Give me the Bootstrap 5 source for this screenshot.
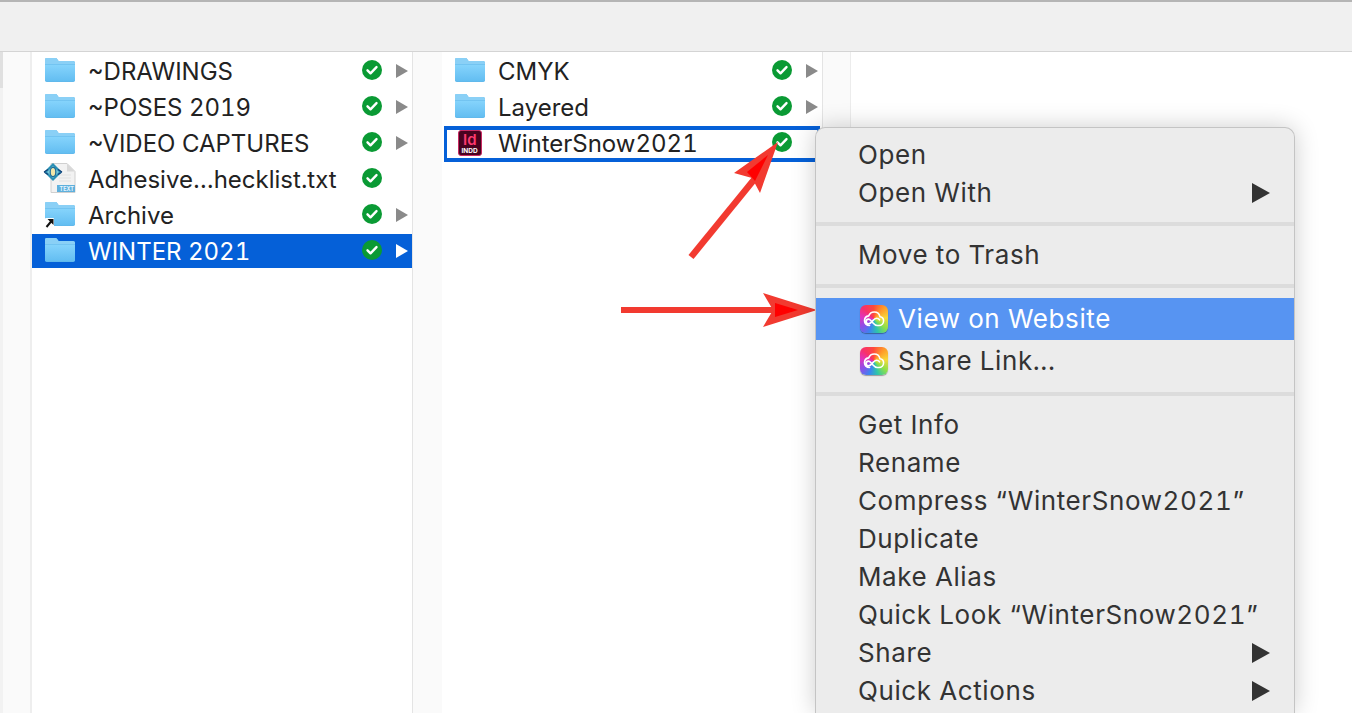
<!doctype html>
<html lang="en">
<head>
<meta charset="utf-8">
<title>Finder</title>
<link href="https://cdn.jsdelivr.net/npm/bootstrap@5.3.0/dist/css/bootstrap.min.css" rel="stylesheet">
<style>
html,body{height:713px;overflow:hidden;background:#fff}
body{font-family:Inter,"Liberation Sans",sans-serif;color:#222;position:relative;font-variant-numeric:tabular-nums}
.topbar{height:52px;background:#f0f0f0;border-top:2px solid #b5b5b5;border-bottom:1px solid #d4d4d4}
.browser{height:661px}
.gutter{width:32px;background:#fafafa;border-left:3px solid #f2f2f2;border-right:2px solid #eee;position:relative}
.gutter::before{content:"";position:absolute;left:-3px;top:0;width:3px;height:36px;background:#e0e0e0}
.pane{width:381px;border-right:1px solid #e4e4e4;padding-top:1px}
.spacer{width:29px;background:#fafafa}
.spacer2{width:28px;background:#fafafa;border-right:1px solid #ececec}
.frow{height:36px;background:transparent;border:0;padding:0;font-size:24px;color:#222;display:flex;align-items:center;position:relative;border-radius:0}
.frow svg{overflow:visible}
.frow .ficon{position:absolute;left:13px;top:4px;width:30px;height:26px}
.frow .fname{position:absolute;left:56px;top:1px;line-height:36px;white-space:nowrap}
.frow .fcheck{position:absolute;left:330px;top:7px;width:20px;height:20px}
.frow .farrow{position:absolute;left:364px;top:11px;width:12px;height:14px;fill:#8a8a8a}
.frow.sel{background:linear-gradient(#0560d8,#0560d8) 0 1px/100% 34px no-repeat;color:#fff}
.frow.sel .farrow{fill:#fff}
.frow.outlined{background:transparent}
.frow.outlined::after{content:"";position:absolute;left:2px;right:2px;top:1px;bottom:-1px;border:solid #0560d8;border-width:4px 3px}
.ficon.txtdoc{top:2px;height:30px}
.ficon.inddicon{left:16px;top:5px;width:24px;height:26px}
.ctx{display:block;position:absolute;left:815px;top:127px;width:480px;height:586px;margin:0;padding:8px 0 0;background:#ececec;border:1px solid #c4c4c4;border-bottom:0;border-radius:10px 10px 0 0;box-shadow:0 0 24px rgba(0,0,0,.2);font-size:26px;color:#333;overflow:hidden}
.ctx .dropdown-item{height:38px;padding:0 0 0 42px;line-height:38px;color:#333;position:relative;letter-spacing:.6px;white-space:nowrap}
.ctx .dropdown-divider{height:4px;margin:10px 0;border:0;background:#dcdcdc;opacity:1}
.ctx .dropdown-item.cc{height:42px;line-height:42px;padding-left:82px}
.ctx .dropdown-item.cc.active,.ctx .dropdown-item.cc:active{background:#5794f2;color:#fff}
.cc-icon{position:absolute;left:44px;top:7px;width:28px;height:28px;border-radius:6px;box-shadow:0 1px 1px rgba(0,0,0,.35);background:conic-gradient(from 315deg,#f8306c,#ff4a3a 12%,#ff9a2a 24%,#f7d93a 36%,#8ee04a 48%,#2fc6a8 58%,#3a86f0 68%,#8a50e8 78%,#e032c0 90%,#f8306c)}
.cc-icon svg{display:block;width:28px;height:28px}
.sub{position:absolute;right:24px;top:9px;width:18px;height:20px;fill:#333}
.arrows{position:absolute;left:0;top:0;width:1352px;height:713px;pointer-events:none}
</style>
</head>
<body>
<svg width="0" height="0" class="d-block position-absolute">
<defs>
<linearGradient id="fg" x1="0" y1="0" x2="0" y2="1"><stop offset="0" stop-color="#86d4fc"/><stop offset="1" stop-color="#62bdf1"/></linearGradient>
<symbol id="folder" viewBox="0 0 30 26"><path d="M1.500 1h8.500c1.200 0 1.800.5 2.500 1.400L13.600 4H28c1.200 0 2 .8 2 2v17c0 1.200-.8 2-2 2H2c-1.200 0-2-.8-2-2V2.500C0 1.700.7 1 1.500 1z" fill="#5fb4e6"/><path d="M1.500 1h8.500c1.200 0 1.800.5 2.500 1.400L13.600 4H28c1.200 0 2 .8 2 2v1H0V2.500C0 1.700.7 1 1.500 1z" fill="#8ad0f6"/><path d="M0 7.500h30V23c0 .9-.7 1.500-1.600 1.500H1.600C.7 24.500 0 23.900 0 23z" fill="url(#fg)"/></symbol>
<symbol id="check" viewBox="0 0 20 20"><circle cx="10" cy="10" r="10" fill="#0a9a34"/><path d="M5.500 10.300l3 3 6-6.200" fill="none" stroke="#fff" stroke-width="2.400" stroke-linecap="round" stroke-linejoin="round"/></symbol>
<symbol id="tri" viewBox="0 0 12 14" preserveAspectRatio="none"><path d="M0 0l12 7-12 7z"/></symbol>
<symbol id="ccmark" viewBox="0 0 28 28"><path d="M9.500 20.500C6.500 20.500 4.500 18.300 4.500 15.700c0-2.500 1.800-4.500 4.200-4.800C9.700 8.300 11.800 7 14.200 7c3 0 5.200 2 5.700 4.700 2.200.3 3.700 2 3.700 4.100 0 2.600-2.100 4.700-4.700 4.700h-1.800c-1.800 0-2.900-1-4.100-2.400l-2.200-2.600c-.8-.9-1.400-1.400-2.300-1.400-1.300 0-2.300 1-2.300 2.300s1 2.300 2.400 2.300c1.100 0 1.900-.5 2.600-1.300l1.600-1.800c1.200-1.400 2.200-2.300 3.800-2.300 1.300 0 2.300.7 2.900 1.500" fill="none" stroke="#fff" stroke-width="1.600" stroke-linecap="round" stroke-linejoin="round"/></symbol>
</defs>
</svg>

<div class="topbar"></div>
<div class="browser d-flex">
  <div class="gutter flex-shrink-0"></div>
  <div class="pane flex-shrink-0">
    <div class="list-group list-group-flush">
      <div class="list-group-item frow"><svg class="ficon"><use href="#folder"/></svg><span class="fname">~DRAWINGS</span><svg class="fcheck"><use href="#check"/></svg><svg class="farrow"><use href="#tri"/></svg></div>
      <div class="list-group-item frow"><svg class="ficon"><use href="#folder"/></svg><span class="fname">~POSES 2019</span><svg class="fcheck"><use href="#check"/></svg><svg class="farrow"><use href="#tri"/></svg></div>
      <div class="list-group-item frow"><svg class="ficon"><use href="#folder"/></svg><span class="fname">~VIDEO CAPTURES</span><svg class="fcheck"><use href="#check"/></svg><svg class="farrow"><use href="#tri"/></svg></div>
      <div class="list-group-item frow">
        <svg class="ficon txtdoc" viewBox="0 0 30 30">
          <path d="M6 .5h16l8 8v21H6z" fill="#f2f2f2" stroke="#d0d0d0"/>
          <path d="M22 .5v8h8z" fill="#d8d8d8"/>
          <path d="M14 12h12M14 15h12M14 18h12" stroke="#e2e2e2"/>
          <rect x="12" y="22" width="18" height="7" fill="#5fb0dc"/>
          <text x="14.500" y="28" font-family="Inter,Liberation Sans,sans-serif" font-size="5.500" font-weight="700" fill="#e8f6ff">TEXT</text>
          <path d="M8 0l9 9-9 9-9-9z" fill="#2a8fb4"/>
          <path d="M8 3l6 6-6 6-6-6z" fill="#7cc7d8"/>
          <ellipse cx="8" cy="9" rx="2.800" ry="4.600" fill="#f2e6a8" stroke="#1f6d99" stroke-width="1.200"/>
          <path d="M-1 9l4-2.500M17 9l-4-2.500M-1 9l4 2.500M17 9l-4 2.500" stroke="#123f77" stroke-width="1.200"/>
        </svg>
        <span class="fname">Adhesive…hecklist.txt</span><svg class="fcheck"><use href="#check"/></svg></div>
      <div class="list-group-item frow"><svg class="ficon"><use href="#folder"/></svg>
        <svg class="ficon" viewBox="0 0 30 26"><rect x="0" y="17" width="9" height="10" rx="1" fill="#fff"/><path d="M1.500 26l5-6" stroke="#111" stroke-width="2" fill="none"/><path d="M2.500 18h6v6z" fill="#111"/></svg>
        <span class="fname">Archive</span><svg class="fcheck"><use href="#check"/></svg><svg class="farrow"><use href="#tri"/></svg></div>
      <div class="list-group-item frow sel"><svg class="ficon"><use href="#folder"/></svg><span class="fname">WINTER 2021</span><svg class="fcheck"><use href="#check"/></svg><svg class="farrow"><use href="#tri"/></svg></div>
    </div>
  </div>
  <div class="spacer flex-shrink-0"></div>
  <div class="pane flex-shrink-0">
    <div class="list-group list-group-flush">
      <div class="list-group-item frow"><svg class="ficon"><use href="#folder"/></svg><span class="fname">CMYK</span><svg class="fcheck"><use href="#check"/></svg><svg class="farrow"><use href="#tri"/></svg></div>
      <div class="list-group-item frow"><svg class="ficon"><use href="#folder"/></svg><span class="fname">Layered</span><svg class="fcheck"><use href="#check"/></svg><svg class="farrow"><use href="#tri"/></svg></div>
      <div class="list-group-item frow outlined">
        <svg class="ficon inddicon" viewBox="0 0 24 26"><rect x=".5" y=".5" width="23" height="25" rx="2.500" fill="#49021f" stroke="#c92a62" stroke-width="1"/><text x="5" y="15" font-family="Inter,Liberation Sans,sans-serif" font-size="15" font-weight="600" fill="#ff3a70">Id</text><text x="3.500" y="23" font-family="Inter,Liberation Sans,sans-serif" font-size="6.500" font-weight="700" fill="#fff">INDD</text></svg>
        <span class="fname">WinterSnow2021</span><svg class="fcheck"><use href="#check"/></svg></div>
    </div>
  </div>
  <div class="spacer2 flex-shrink-0"></div>
</div>

<div class="dropdown-menu ctx">
  <a class="dropdown-item" href="#">Open</a>
  <a class="dropdown-item" href="#">Open With<svg class="sub"><use href="#tri"/></svg></a>
  <hr class="dropdown-divider">
  <a class="dropdown-item" href="#">Move to Trash</a>
  <hr class="dropdown-divider">
  <a class="dropdown-item cc active" href="#"><span class="cc-icon"><svg><use href="#ccmark"/></svg></span>View on Website</a>
  <a class="dropdown-item cc" href="#"><span class="cc-icon"><svg><use href="#ccmark"/></svg></span>Share Link...</a>
  <hr class="dropdown-divider">
  <a class="dropdown-item" href="#">Get Info</a>
  <a class="dropdown-item" href="#">Rename</a>
  <a class="dropdown-item" href="#">Compress “WinterSnow2021”</a>
  <a class="dropdown-item" href="#">Duplicate</a>
  <a class="dropdown-item" href="#">Make Alias</a>
  <a class="dropdown-item" href="#">Quick Look “WinterSnow2021”</a>
  <a class="dropdown-item" href="#">Share<svg class="sub"><use href="#tri"/></svg></a>
  <a class="dropdown-item" href="#">Quick Actions<svg class="sub"><use href="#tri"/></svg></a>
</div>

<svg class="arrows" viewBox="0 0 1352 713">
  <path d="M691 257L757 176" stroke="#f23a30" stroke-width="6.500" fill="none"/>
  <path d="M778 142L734 173 752 178 760 193z" fill="#f23a30"/>
  <path d="M768 155L747 172 755 181z" fill="#ff0000"/>
  <path d="M621 310H775" stroke="#f23a30" stroke-width="6" fill="none"/>
  <path d="M817 310L763 293 773 310 763 327z" fill="#f23a30"/>
  <path d="M775 303L798 310 775 317z" fill="#ff0000"/>
</svg>
</body>
</html>
